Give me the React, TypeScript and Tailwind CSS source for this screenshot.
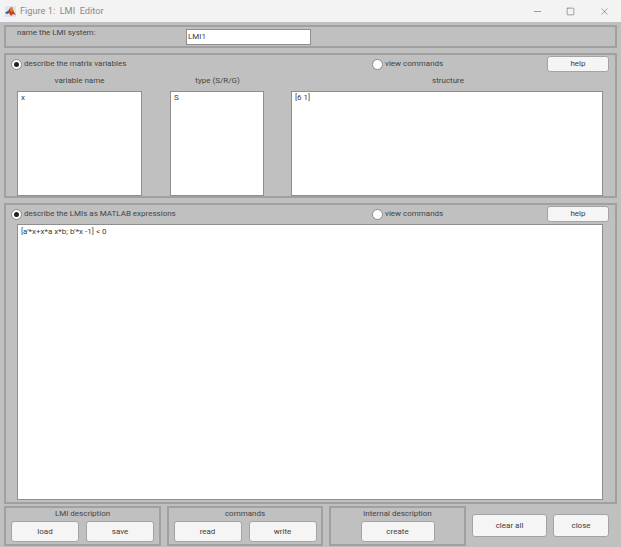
import { Minus, Square, X } from "lucide-react";

const font = "font-['Roboto','Liberation_Sans',sans-serif]";

function Btn({ label, className }: { label: string; className: string }) {
  return (
    <button className={`flex items-center justify-center rounded-[3px] border border-[#a3a3a3] bg-[#f5f5f5] text-[8px] text-[#3d3d3d] ${className}`}>
      {label}
    </button>
  );
}

function Radio({ on }: { on?: boolean }) {
  return (
    <span className="flex h-[11px] w-[11px] items-center justify-center rounded-full border border-[#8a8a8a] bg-white">
      {on && <span className="h-[5px] w-[5px] rounded-full bg-[#222]" />}
    </span>
  );
}

function PanelHeader({ title }: { title: string }) {
  return (
    <div className="mt-[1px] flex h-[16px] items-center">
      <div className="ml-[5px] flex w-[361px] items-center gap-[2px]">
        <Radio on />
        <span className="text-[#444]">{title}</span>
      </div>
      <div className="flex w-[175px] items-center gap-[2px]">
        <Radio />
        <span className="text-[#444]">view commands</span>
      </div>
      <Btn label="help" className="h-[16px] w-[62px]" />
    </div>
  );
}

function Box({ text, className }: { text: string; className: string }) {
  return (
    <div className={`border border-[#8e8e8e] bg-white px-[3px] text-[#3d3d3d] ${className}`}>{text}</div>
  );
}

function Group({ title, className, children }: { title: string; className: string; children: React.ReactNode }) {
  return (
    <div className={`flex h-[40px] flex-col border-2 border-[#a0a0a0] ${className}`}>
      <div className="h-[13px] text-center leading-[11px] text-[#444]">{title}</div>
      <div className="flex justify-center gap-[7px]">{children}</div>
    </div>
  );
}

export default function App() {
  return (
    <div className={`flex h-[547px] w-[621px] flex-col overflow-hidden bg-[#c0c0c0] text-[8px] ${font}`}>
      <div className="flex h-[22px] items-center bg-[#f3f3f3] pl-[5px]">
        <svg width="11" height="11" viewBox="0 0 11 11">
          <rect width="11" height="11" fill="#dbe4f0" />
          <path d="M0 7 L3 5 L5 2 L7 1 L9 6 L11 9 L8 8 L6 10 L4 7 L2 7Z" fill="#c8401a" />
          <path d="M0 7 L3 5 L4 7 L2 8Z" fill="#2b5f9e" />
          <path d="M5 2 L7 1 L8 5 L6 6Z" fill="#e8872a" />
        </svg>
        <span className="ml-[4px] text-[9.2px] text-[#8a8a8a]">Figure 1:&nbsp; LMI&nbsp; Editor</span>
        <div className="ml-auto flex items-center text-[#555]">
          <Minus size={11} strokeWidth={1.2} className="mr-[23px]" />
          <Square size={9} strokeWidth={1.4} className="mr-[24px]" />
          <X size={11} strokeWidth={1.2} className="mr-[11px]" />
        </div>
      </div>

      <div className="mx-[4px] mt-[3px] flex h-[23px] border-2 border-[#a0a0a0]">
        <span className="ml-[11px] w-[169px] leading-[11px] text-[#444]">name the LMI system:</span>
        <div className="mt-[2px] h-[16px] w-[125px] border border-[#8e8e8e] bg-white px-[1px] leading-[14px] text-[#3d3d3d]">LMI1</div>
      </div>

      <div className="mx-[4px] mt-[5px] flex h-[145px] flex-col border-2 border-[#a0a0a0]">
        <PanelHeader title="describe the matrix variables" />
        <div className="mt-[1px] flex h-[16px] items-center text-[#444]">
          <span className="ml-[11px] w-[125px] text-center">variable name</span>
          <span className="ml-[29px] w-[93px] text-center">type (S/R/G)</span>
          <span className="ml-[28px] w-[312px] text-center">structure</span>
        </div>
        <div className="mt-[3px] flex">
          <Box text="x" className="ml-[11px] h-[105px] w-[125px]" />
          <Box text="S" className="ml-[28px] h-[105px] w-[94px]" />
          <Box text="[6 1]" className="ml-[27px] h-[105px] w-[312px]" />
        </div>
      </div>

      <div className="mx-[4px] mt-[5px] flex h-[301px] flex-col border-2 border-[#a0a0a0]">
        <PanelHeader title="describe the LMIs as MATLAB expressions" />
        <Box text="[a'*x+x*a x*b; b'*x -1] < 0" className="ml-[11px] mt-[2px] h-[276px] w-[586px] pt-[1px]" />
      </div>

      <div className="mt-[2px] flex items-start pl-[4px]">
        <Group title="LMI description" className="w-[157px]">
          <Btn label="load" className="h-[21px] w-[68px]" />
          <Btn label="save" className="h-[21px] w-[68px]" />
        </Group>
        <Group title="commands" className="ml-[6px] w-[156px]">
          <Btn label="read" className="h-[21px] w-[68px]" />
          <Btn label="write" className="h-[21px] w-[68px]" />
        </Group>
        <Group title="internal description" className="ml-[6px] w-[137px]">
          <Btn label="create" className="h-[21px] w-[74px]" />
        </Group>
        <Btn label="clear all" className="ml-[6px] mt-[8px] h-[23px] w-[75px]" />
        <Btn label="close" className="ml-[6px] mt-[8px] h-[23px] w-[56px]" />
      </div>
    </div>
  );
}
